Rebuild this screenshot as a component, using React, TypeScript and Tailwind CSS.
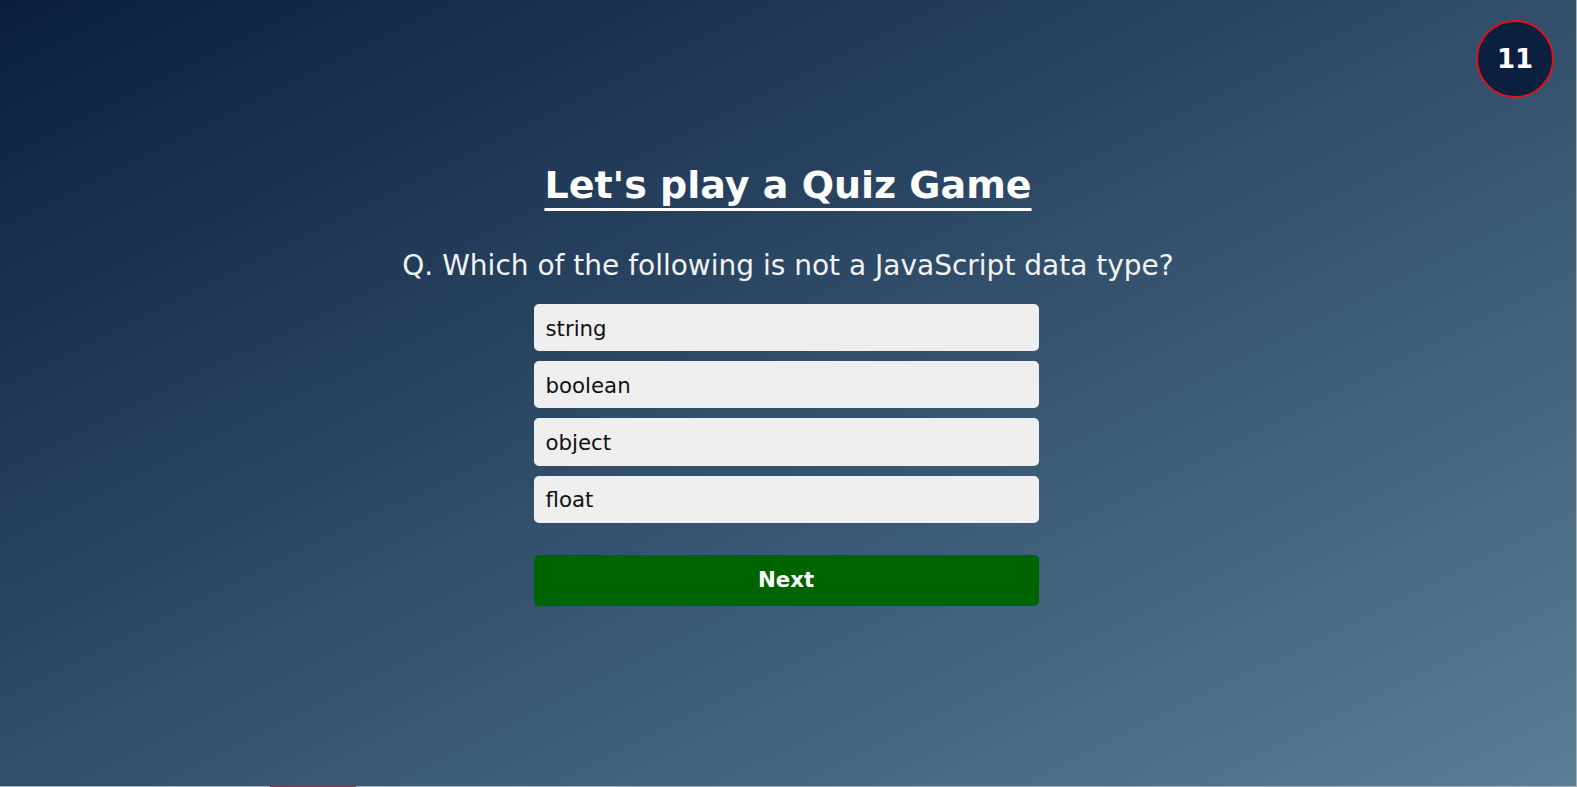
import { useState } from "react";

const options = ["string", "boolean", "object", "float"];

export default function App() {
  const [selected, setSelected] = useState<number | null>(null);

  return (
    <div className="font-['DejaVu_Sans',Verdana,sans-serif]">
      <div className="relative h-[786px] bg-[linear-gradient(to_bottom_right,#0a1f3f,#597e96)] flex flex-col items-center border-r border-[#a5b0b8]">
        {/* Timer */}
        <div className="absolute top-[20px] right-[22px] w-[78px] h-[78px] rounded-full bg-[#0b1f3f] border-2 border-[#e0121b] flex items-center justify-center text-white font-bold text-[26px] leading-none">
          11
        </div>

        <h1 className="mt-[163px] text-white font-bold text-[38px] leading-[1.164] underline underline-offset-[10px] decoration-[3px]">
          Let's play a Quiz Game
        </h1>

        <p className="mt-[43px] text-[28px] leading-[1.164] text-[#f2f2f2]">
          Q. Which of the following is not a JavaScript data type?
        </p>

        <div className="mt-[16px] mr-[4px] w-[505px] flex flex-col">
          {options.map((opt, i) => (
            <button
              key={opt}
              onClick={() => setSelected(i)}
              className={
                "my-[5px] h-[47.3px] flex items-center pt-[3px] text-left text-[21.3px] leading-[1.164] text-[#111] px-[10px] border-2 rounded-[5px] " +
                (selected === i
                  ? "bg-[#dcdcdc] border-[#dcdcdc]"
                  : "bg-[#efefef] border-[#efefef]")
              }
            >
              {opt}
            </button>
          ))}

          <button className="mt-[26.7px] h-[51px] bg-[#006400] rounded-[5px] text-white font-bold text-[21.3px] leading-[1.164]">
            Next
          </button>
        </div>
      </div>
      <div className="h-[1px] bg-[#a5b0b8] flex">
        <div className="ml-[270px] w-[86px] bg-[#8c3a44]" />
      </div>
    </div>
  );
}
